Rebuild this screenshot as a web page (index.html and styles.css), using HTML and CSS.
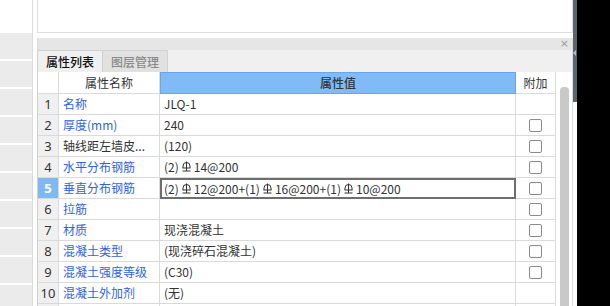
FILE: index.html
```html
<!DOCTYPE html>
<html lang="zh">
<head>
<meta charset="utf-8">
<link rel="stylesheet" href="styles.css">
</head>
<body>
<div class="app">
  <aside class="side">
    <div class="blk"></div><div class="blk"></div><div class="blk"></div><div class="blk"></div><div class="blk"></div>
    <div class="blk"></div><div class="blk"></div><div class="blk"></div><div class="blk"></div><div class="blk"></div>
  </aside>
  <div class="gutter"></div>
  <main class="panel">
    <div class="topbox"></div>
    <div class="titlebar"><span class="close">×</span></div>
    <div class="tabs">
      <div class="tab active">属性列表</div>
      <div class="tab">图层管理</div>
    </div>
    <div class="gridwrap">
      <div class="table">
        <div class="row head">
          <div class="c num"></div>
          <div class="c name hc">属性名称</div>
          <div class="c val hv">属性值</div>
          <div class="c add ha">附加</div>
        </div>
        <div class="row"><div class="c num">1</div><div class="c name blue">名称</div><div class="c val">JLQ-1</div><div class="c add"></div></div>
        <div class="row"><div class="c num">2</div><div class="c name blue">厚度(mm)</div><div class="c val">240</div><div class="c add"><span class="cb"></span></div></div>
        <div class="row"><div class="c num">3</div><div class="c name">轴线距左墙皮...</div><div class="c val">(120)</div><div class="c add"><span class="cb"></span></div></div>
        <div class="row"><div class="c num">4</div><div class="c name blue">水平分布钢筋</div><div class="c val">(2)<span class="rb"><svg width="9" height="11" viewBox="0 0 9 11"><path d="M1 7V5A3.5 3.5 0 0 1 8 5V7M4.5 0.5V10M0.5 7H8.5M0.5 10H8.5" fill="none" stroke="#333" stroke-width="1"/></svg></span>14@200</div><div class="c add"><span class="cb"></span></div></div>
        <div class="row"><div class="c num sel">5</div><div class="c name blue">垂直分布钢筋</div><div class="c val edit">(2)<span class="rb"><svg width="9" height="11" viewBox="0 0 9 11"><path d="M1 7V5A3.5 3.5 0 0 1 8 5V7M4.5 0.5V10M0.5 7H8.5M0.5 10H8.5" fill="none" stroke="#333" stroke-width="1"/></svg></span>12@200+(1)<span class="rb"><svg width="9" height="11" viewBox="0 0 9 11"><path d="M1 7V5A3.5 3.5 0 0 1 8 5V7M4.5 0.5V10M0.5 7H8.5M0.5 10H8.5" fill="none" stroke="#333" stroke-width="1"/></svg></span>16@200+(1)<span class="rb"><svg width="9" height="11" viewBox="0 0 9 11"><path d="M1 7V5A3.5 3.5 0 0 1 8 5V7M4.5 0.5V10M0.5 7H8.5M0.5 10H8.5" fill="none" stroke="#333" stroke-width="1"/></svg></span>10@200</div><div class="c add"><span class="cb"></span></div></div>
        <div class="row"><div class="c num">6</div><div class="c name blue">拉筋</div><div class="c val"></div><div class="c add"><span class="cb"></span></div></div>
        <div class="row"><div class="c num">7</div><div class="c name blue">材质</div><div class="c val">现浇混凝土</div><div class="c add"><span class="cb"></span></div></div>
        <div class="row"><div class="c num">8</div><div class="c name blue">混凝土类型</div><div class="c val">(现浇碎石混凝土)</div><div class="c add"><span class="cb"></span></div></div>
        <div class="row"><div class="c num">9</div><div class="c name blue">混凝土强度等级</div><div class="c val">(C30)</div><div class="c add"><span class="cb"></span></div></div>
        <div class="row"><div class="c num">10</div><div class="c name blue">混凝土外加剂</div><div class="c val">(无)</div><div class="c add"></div></div>
        <div class="row"><div class="c num"></div><div class="c name"></div><div class="c val"></div><div class="c add"></div></div>
      </div>
      <div class="scroll"><div class="thumb"></div></div>
    </div>
  </main>
  <div class="edge"><div class="edgebar"><span class="notch"></span></div></div>
  <div class="dark"></div>
</div>
</body>
</html>
```

FILE: styles.css
```css
* { box-sizing: border-box; }
html, body { margin: 0; padding: 0; background: #fff; }
body {
  width: 610px; height: 306px; overflow: hidden;
  font-family: "Noto Sans CJK SC", "Noto Sans", sans-serif;
  font-size: 12px; color: #333;
}
.app { display: flex; width: 610px; height: 306px; overflow: hidden; }

.side {
  width: 33px; flex: none; border-right: 1px solid #dcdcdc;
  padding-top: 33px; display: flex; flex-direction: column; gap: 2px;
}
.blk { height: 26px; flex: none; background: #ebebeb; }
.gutter { width: 4px; flex: none; }

.panel { width: 536px; flex: none; display: flex; flex-direction: column; }
.topbox {
  height: 33px; flex: none;
  border: 1px solid #dcdcdc; border-top: none;
}
.titlebar {
  margin-top: 5px; height: 12px; flex: none;
  background: #e6e6e6; border-left: 1px solid #dcdcdc; border-right: 1px solid #dcdcdc;
  display: flex; justify-content: flex-end; align-items: center; padding-right: 3px;
}
.close { color: #9a9a9a; font-family: "DejaVu Sans", sans-serif; font-size: 11px; line-height: 12px; }

.tabs {
  height: 22px; flex: none; display: flex;
  background: #f0f0f0; border-left: 1px solid #d0d0d0; border-right: 1px solid #dcdcdc;
}
.tab {
  height: 22px; padding: 0 8px; line-height: 21px; font-size: 12px;
  border: 1px solid #d2d2d2; border-left: none; border-bottom: none;
  background: #e1e1e1; color: #8a8a8a; width: 65px; font-weight: 500;
}
.tab.active { background: #f0f0f0; color: #111; }

.gridwrap { flex: 1; display: flex; border-right: 1px solid #dcdcdc; }
.table { width: 519px; flex: none; border-left: 1px solid #d0d0d0; }
.row {
  display: grid; grid-template-columns: 21px 101px 356px 40px;
  height: 21px;
}
.row.head { height: 22px; }
.c {
  border-right: 1px solid #dadada; border-bottom: 1px solid #dadada;
  padding-left: 4px; line-height: 20px; white-space: nowrap; overflow: hidden;
}
.num {
  background: #f0f0f0; padding: 0; text-align: center;
  font-family: "Noto Sans", sans-serif; font-size: 13px; color: #333;
}
.num.sel { background: #80b8f2; color: #fff; font-weight: bold; }
.head .num { background: #fff; }
.hc { text-align: center; padding: 0; line-height: 21px; color: #333; }
.hv {
  background: #80bbf7; border: 1px solid #6aa5ea; color: #fff;
  text-align: center; padding: 0; line-height: 19px; font-weight: 500;
}
.ha { text-align: center; padding: 0; line-height: 21px; }
.blue { color: #2f62e6; }
.val { color: #333; }
.val.edit { border: 2px solid #6e6e6e; padding-left: 2px; line-height: 17px; }
.add { padding: 0; display: flex; justify-content: center; align-items: center; }
.cb {
  width: 13px; height: 13px; border: 1.3px solid #8a8a8a; border-radius: 2px; background: #fff;
}
.rb { display: inline-block; width: 15px; text-align: center; vertical-align: 0; }
.rb svg { display: inline-block; }

.scroll { width: 16px; flex: none; position: relative; }
.thumb {
  position: absolute; left: 4px; top: 15px; width: 9px; bottom: 0;
  background: #c9c9c9; border-radius: 4px 4px 0 0;
}

.edge { width: 4px; flex: none; }
.edgebar { height: 102px; background: #5c646e; position: relative; }
.notch {
  position: absolute; left: 0; top: 50px; width: 0; height: 0;
  border-top: 3px solid transparent; border-bottom: 3px solid transparent;
  border-right: 3px solid #b8bcc2;
}
.dark { flex: 1; background: #000; }
```
